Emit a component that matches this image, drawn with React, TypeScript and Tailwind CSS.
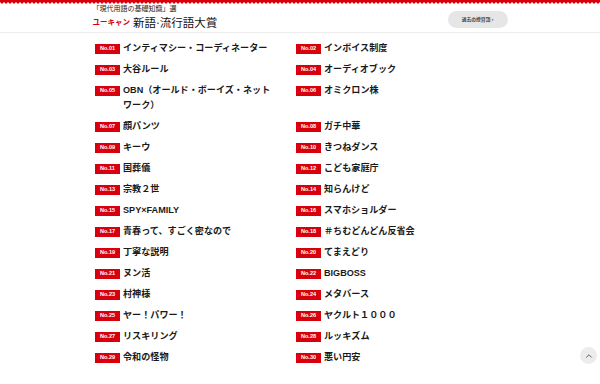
import { ChevronUp } from "lucide-react";

const NOMINEES = [
  "インティマシー・コーディネーター",
  "インボイス制度",
  "大谷ルール",
  "オーディオブック",
  "OBN（オールド・ボーイズ・ネットワーク）",
  "オミクロン株",
  "顔パンツ",
  "ガチ中華",
  "キーウ",
  "きつねダンス",
  "国葬儀",
  "こども家庭庁",
  "宗教２世",
  "知らんけど",
  "SPY×FAMILY",
  "スマホショルダー",
  "青春って、すごく密なので",
  "＃ちむどんどん反省会",
  "丁寧な説明",
  "てまえどり",
  "ヌン活",
  "BIGBOSS",
  "村神様",
  "メタバース",
  "ヤー！パワー！",
  "ヤクルト１０００",
  "リスキリング",
  "ルッキズム",
  "令和の怪物",
  "悪い円安",
];

function Zigzag() {
  return (
    <svg className="block h-[4px] w-full" preserveAspectRatio="none">
      <defs>
        <pattern id="zig" width="4" height="4" patternUnits="userSpaceOnUse">
          <path d="M0 0H4V2L2 4L0 2Z" fill="#d9000d" />
        </pattern>
      </defs>
      <rect width="100%" height="4" fill="url(#zig)" />
    </svg>
  );
}

export default function App() {
  return (
    <div className="min-h-[384px] bg-white font-['Liberation_Sans','Noto_Sans_CJK_JP',sans-serif] text-[#1a1a1a]">
      <header className="border-b border-[#ececec]">
        <Zigzag />
        <div className="mx-auto flex h-[28px] w-[415px] items-start justify-between">
          <div className="pt-[1px]">
            <p className="font-['Liberation_Serif','Noto_Sans_CJK_JP',serif] text-[7px] leading-[9px] text-[#222]">
              「現代用語の基礎知識」選
            </p>
            <div className="mt-[2px] flex items-center gap-[3px] leading-[14px]">
              <span className="text-[7.5px] font-bold text-[#d9000d]">ユーキャン</span>
              <span className="font-['Liberation_Serif','Noto_Sans_CJK_JP',serif] text-[11.5px] text-[#111]">
                新語·流行語大賞
              </span>
            </div>
          </div>
          <button className="mt-[7px] flex h-[17px] w-[60px] items-center justify-center rounded-full bg-[#e6e6e6] text-[4.8px] font-bold text-[#444]">
            過去の授賞語 ›
          </button>
        </div>
      </header>

      <main className="pt-[8px]">
        <ul className="ml-[95px] grid w-[400px] grid-cols-[184px_1fr] gap-x-[17px] gap-y-[6px]">
          {NOMINEES.map((word, i) => (
            <li key={word} className="flex items-start">
              <span className="mt-[2.5px] mr-[3px] flex h-[10px] w-[25px] shrink-0 items-center justify-center bg-[#d9000d] text-[5.6px] font-bold text-white">
                No.{String(i + 1).padStart(2, "0")}
              </span>
              <span className="text-[9.1px] font-bold leading-[15px]">{word}</span>
            </li>
          ))}
        </ul>
      </main>

      <button className="fixed right-[3px] bottom-[20px] flex h-[17px] w-[17px] items-center justify-center rounded-full bg-[#ececec] text-[#444]">
        <ChevronUp size={10} strokeWidth={2} />
      </button>
    </div>
  );
}
